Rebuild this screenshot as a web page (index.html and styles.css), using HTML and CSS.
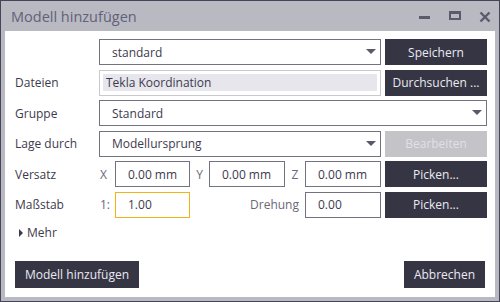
FILE: index.html
```html
<!DOCTYPE html>
<html lang="de">
<head>
  <meta charset="UTF-8" />
  <title>Modell hinzufügen</title>
  <link rel="stylesheet" href="styles.css">
</head>
<body>
  <div class="window">
    <div class="titlebar">
      <span class="title">Modell hinzufügen</span>
      <div class="win-ctrls">
        <svg width="12" height="12" viewBox="0 0 12 12"><rect x="0" y="5" width="11" height="3" fill="currentColor"/></svg>
        <svg width="12" height="12" viewBox="0 0 12 12"><path d="M1 1h10v7H1z" fill="none" stroke="currentColor" stroke-width="2"/><rect x="0" y="0" width="12" height="3" fill="currentColor"/></svg>
        <svg width="12" height="12" viewBox="0 0 12 12"><path d="M1.5 1.5l9 9M10.5 1.5l-9 9" stroke="currentColor" stroke-width="2.4"/></svg>
      </div>
    </div>

    <div class="content">
      <div class="form">
        <span></span>
        <div class="select">standard<i class="caret"></i></div>
        <button class="btn">Speichern</button>

        <label>Dateien</label>
        <div class="readonly"><span>Tekla Koordination</span></div>
        <button class="btn">Durchsuchen ...</button>

        <label>Gruppe</label>
        <div class="select wide">Standard<i class="caret"></i></div>

        <label>Lage durch</label>
        <div class="select">Modellursprung<i class="caret"></i></div>
        <button class="btn disabled">Bearbeiten</button>

        <label>Versatz</label>
        <div class="xyz">
          <span class="axis first">X</span>
          <div class="field">0.00 mm</div>
          <span class="axis">Y</span>
          <div class="field">0.00 mm</div>
          <span class="axis">Z</span>
          <div class="field">0.00 mm</div>
        </div>
        <button class="btn">Picken...</button>

        <label>Maßstab</label>
        <div class="scale">
          <span class="axis first">1:</span>
          <div class="field focus">1.00</div>
          <span class="rot">Drehung</span>
          <div class="field">0.00</div>
        </div>
        <button class="btn">Picken...</button>
      </div>

      <div class="more"><i class="tri"></i>Mehr</div>

      <div class="actions">
        <button class="btn">Modell hinzufügen</button>
        <button class="btn">Abbrechen</button>
      </div>
    </div>
  </div>
</body>
</html>
```

FILE: styles.css
```css
:root {
  --dark: #363544;
  --frame: #b9b9c2;
  --text: #3d3a4e;
  --line: #73727e;
}

html, body {
  margin: 0;
  padding: 0;
  background: var(--frame);
  font-family: 'Open Sans', sans-serif;
  font-size: 12px;
  color: var(--text);
}

.window {
  width: 500px;
  height: 302px;
  box-sizing: border-box;
  border: 1px solid #45445a;
  background: var(--frame);
  display: flex;
  flex-direction: column;
}

.titlebar {
  height: 30px;
  display: flex;
  align-items: center;
  padding: 0 8px 0 10px;
}

.title {
  flex: 1;
  font-size: 14.5px;
  color: #62617a;
  padding-top: 1px;
}

.win-ctrls {
  display: flex;
  gap: 18px;
  color: #5b5a6c;
  padding-top: 2px;
}

.content {
  flex: 1;
  background: #fff;
  margin: 0 4px 4px 4px;
  padding: 8px 8px 0 10px;
  display: flex;
  flex-direction: column;
}

.form {
  display: grid;
  grid-template-columns: 80px 282px 102px;
  column-gap: 4px;
  grid-auto-rows: 26px;
  row-gap: 4.6px;
  align-items: stretch;
}

.form label {
  display: flex;
  align-items: center;
}

.select {
  position: relative;
  border: 1px solid var(--line);
  display: flex;
  align-items: center;
  padding-left: 12px;
}

.select.wide {
  grid-column: 2 / 4;
}

.caret {
  position: absolute;
  right: 4px;
  top: 50%;
  margin-top: -3px;
  border-left: 5px solid transparent;
  border-right: 5px solid transparent;
  border-top: 5px solid #5a5968;
}

.readonly {
  border: 1px solid #c9c8cf;
  padding: 3px 3px 4px 3px;
  display: flex;
}

.readonly span {
  flex: 1;
  background: #e6e6ec;
  display: flex;
  align-items: center;
  padding-left: 3px;
}

.btn {
  font-family: inherit;
  font-size: 12px;
  background: var(--dark);
  color: #eaeaf2;
  border: none;
  padding: 0 10px;
  margin: 0;
  white-space: nowrap;
}

.form .btn {
  padding: 0;
}

.btn.disabled {
  background: #c3c3c8;
  color: #e0e0e4;
}

.xyz, .scale {
  display: grid;
  grid-template-columns: 16px 75px 19px 76px 20px 76px;
}

.scale {
  grid-template-columns: 16px 75px 1fr 76px;
}

.axis {
  display: flex;
  align-items: center;
  justify-content: center;
  color: #6a6978;
}

.axis.first {
  justify-content: flex-start;
  padding-left: 1px;
}

.rot {
  display: flex;
  align-items: center;
  justify-content: flex-end;
  padding-right: 6px;
  color: #6a6978;
}

.field {
  border: 1px solid var(--line);
  display: flex;
  align-items: center;
  padding-left: 12px;
}

.field.focus {
  border-color: #f0b515;
}

.more {
  margin-top: 7px;
  height: 16px;
  display: flex;
  align-items: center;
  padding-left: 4px;
}

.tri {
  border-top: 4px solid transparent;
  border-bottom: 4px solid transparent;
  border-left: 4px solid #3d3a4e;
  margin-right: 4px;
}

.actions {
  margin-top: auto;
  margin-bottom: 9px;
  display: flex;
  justify-content: space-between;
  padding-right: 2px;
}

.actions .btn {
  height: 27px;
}
```
